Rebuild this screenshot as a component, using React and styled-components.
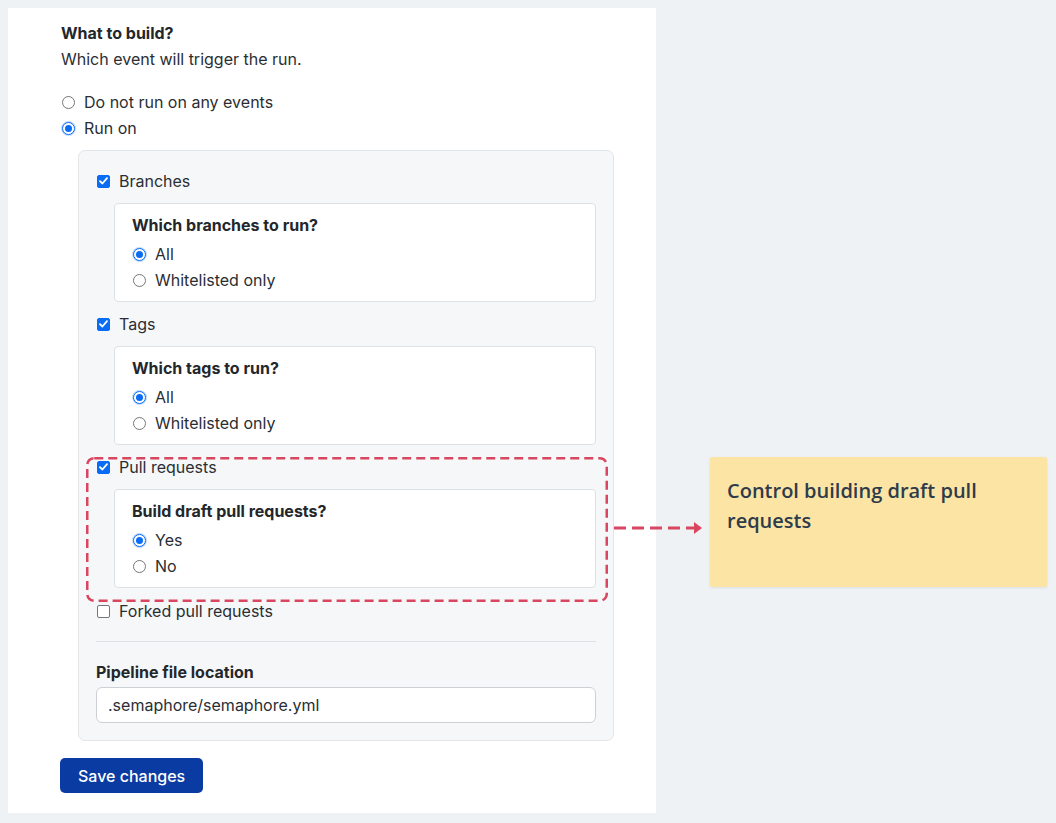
import styled, { createGlobalStyle } from 'styled-components';

const GlobalStyle = createGlobalStyle`
  html, body {
    margin: 0;
    padding: 0;
    background: #eff2f5;
  }
  body {
    font-family: Inter, "Liberation Sans", sans-serif;
    color: #2a2e33;
  }
`;

const Page = styled.div`
  display: flex;
  align-items: flex-start;
  gap: 54px;
  padding: 8px;
  width: 1056px;
  height: 823px;
  box-sizing: border-box;
`;

const Panel = styled.div`
  position: relative;
  width: 648px;
  height: 805px;
  box-sizing: border-box;
  background: #ffffff;
  padding: 12px 52px 20px 53px;
`;

const Heading = styled.div`
  font-size: 16px;
  font-weight: 700;
  line-height: 26px;
  color: #23272b;
`;

const Subtitle = styled.div`
  font-size: 16px;
  line-height: 26px;
  margin-bottom: 17px;
`;

const Row = styled.label`
  display: flex;
  align-items: center;
  gap: 9px;
  height: 26px;
  font-size: 16px;
  padding-left: 1px;
`;

const RadioMark = styled.span`
  width: 13px;
  height: 13px;
  box-sizing: border-box;
  border-radius: 50%;
  border: 1px solid ${p => (p.$on ? '#0a6cf5' : '#767676')};
  background: #fff;
  display: flex;
  align-items: center;
  justify-content: center;
  flex-shrink: 0;
  box-shadow: ${p => (p.$on ? '0 0 0 1px rgba(10,108,245,0.25)' : 'none')};

  &::after {
    content: '';
    width: 7px;
    height: 7px;
    border-radius: 50%;
    background: ${p => (p.$on ? '#0a6cf5' : 'transparent')};
  }
`;

const CheckMark = styled.span`
  width: 13px;
  height: 13px;
  box-sizing: border-box;
  border-radius: 2px;
  border: 1px solid ${p => (p.$on ? '#0a6cf5' : '#767676')};
  background: ${p => (p.$on ? '#0a6cf5' : '#fff')};
  display: flex;
  align-items: center;
  justify-content: center;
  flex-shrink: 0;
`;

const RunBox = styled.div`
  margin: 9px 0 0 17px;
  width: 536px;
  box-sizing: border-box;
  background: #f6f7f9;
  border: 1px solid #e3e6e9;
  border-radius: 7px;
  padding: 17px;
`;

const OptionBox = styled.div`
  margin: 9px 0 9px 18px;
  background: #ffffff;
  border: 1px solid #dee1e4;
  border-radius: 4px;
  padding: 10px 17px 8px 17px;
`;

const BoxTitle = styled.div`
  font-size: 16px;
  font-weight: 700;
  line-height: 22px;
  margin-bottom: 5px;
  color: #23272b;
`;

const Highlight = styled.div`
  position: relative;
  padding-bottom: 1px;
`;

const DashedFrame = styled.svg`
  position: absolute;
  left: -10px;
  top: 3px;
  pointer-events: none;
`;

const Divider = styled.hr`
  border: none;
  border-top: 1px solid #dfe2e5;
  margin: 17px 0 19px 0;
`;

const FieldLabel = styled.div`
  font-size: 16px;
  font-weight: 700;
  line-height: 22px;
  margin-bottom: 4px;
  color: #23272b;
`;

const TextInput = styled.input`
  width: 100%;
  height: 36px;
  box-sizing: border-box;
  border: 1px solid #cdd1d5;
  border-radius: 6px;
  padding: 0 11px;
  font-family: Inter, "Liberation Sans", sans-serif;
  font-size: 16px;
  color: #2a2e33;
  background: #fff;
  outline: none;
`;

const SaveButton = styled.button`
  margin: 17px 0 0 -1px;
  height: 35px;
  padding: 0 18px;
  background: #0a3ba3;
  color: #fff;
  border: none;
  border-radius: 5px;
  font-family: Inter, "Liberation Sans", sans-serif;
  font-size: 16px;
  font-weight: 500;
`;

const Arrow = styled.svg`
  position: absolute;
  left: 606px;
  top: 512px;
`;

const Note = styled.div`
  margin-top: 449px;
  width: 337px;
  height: 130px;
  box-sizing: border-box;
  background: #fce5a4;
  box-shadow: 0 1px 3px rgba(0, 0, 0, 0.08);
  border-radius: 2px;
  padding: 19px 17px;
  font-family: "Open Sans", Roboto, sans-serif;
  font-size: 20px;
  font-weight: 600;
  line-height: 30px;
  color: #2e3b4b;
`;

const Radio = ({ on, children }) => (
  <Row>
    <RadioMark $on={on} />
    {children}
  </Row>
);

const Check = ({ on, children }) => (
  <Row>
    <CheckMark $on={on}>
      {on && (
        <svg width="9" height="8" viewBox="0 0 9 8">
          <path d="M1 4.2 L3.4 6.5 L8 1.2" stroke="#fff" strokeWidth="1.8" fill="none" strokeLinecap="round" strokeLinejoin="round" />
        </svg>
      )}
    </CheckMark>
    {children}
  </Row>
);

const Options = ({ title, items, selected }) => (
  <OptionBox>
    <BoxTitle>{title}</BoxTitle>
    {items.map((item, i) => (
      <Radio key={item} on={i === selected}>{item}</Radio>
    ))}
  </OptionBox>
);

const App = () => {
  return (
    <>
      <GlobalStyle />
      <Page>
        <Panel>
          <Heading>What to build?</Heading>
          <Subtitle>Which event will trigger the run.</Subtitle>
          <Radio>Do not run on any events</Radio>
          <Radio on>Run on</Radio>
          <RunBox>
            <Check on>Branches</Check>
            <Options title="Which branches to run?" items={['All', 'Whitelisted only']} selected={0} />
            <Check on>Tags</Check>
            <Options title="Which tags to run?" items={['All', 'Whitelisted only']} selected={0} />
            <Highlight>
              <Check on>Pull requests</Check>
              <Options title="Build draft pull requests?" items={['Yes', 'No']} selected={0} />
              <DashedFrame width="522" height="145" viewBox="0 0 522 145">
                <rect x="1.25" y="1.25" width="519.5" height="142.5" rx="7" fill="none" stroke="#d8465f" strokeWidth="2.5" strokeDasharray="9 5" />
              </DashedFrame>
            </Highlight>
            <Check>Forked pull requests</Check>
            <Divider />
            <FieldLabel>Pipeline file location</FieldLabel>
            <TextInput defaultValue=".semaphore/semaphore.yml" readOnly />
          </RunBox>
          <SaveButton>Save changes</SaveButton>
          <Arrow width="92" height="16" viewBox="0 0 92 16">
            <line x1="0" y1="8" x2="80" y2="8" stroke="#d8465f" strokeWidth="3" strokeDasharray="12 6" />
            <path d="M80 2 L88 8 L80 14 Z" fill="#d8465f" />
          </Arrow>
        </Panel>
        <Note>Control building draft pull requests</Note>
      </Page>
    </>
  );
};

export default App;
